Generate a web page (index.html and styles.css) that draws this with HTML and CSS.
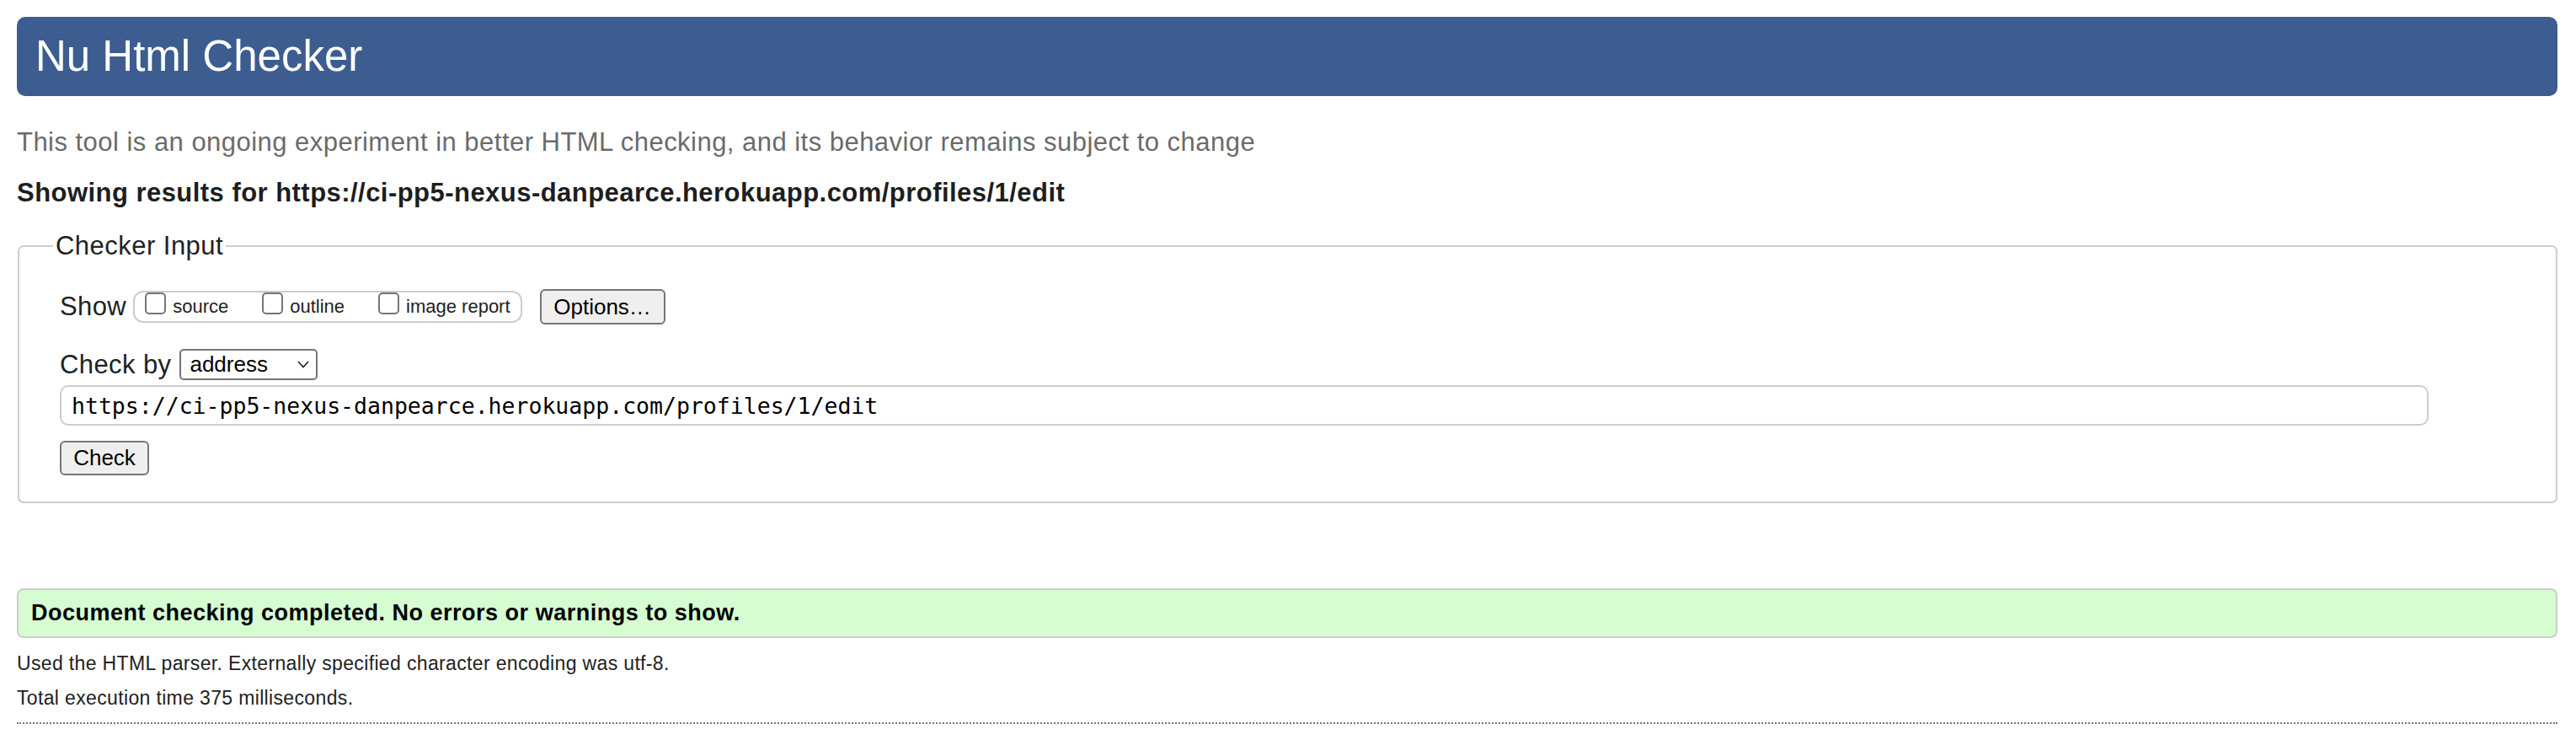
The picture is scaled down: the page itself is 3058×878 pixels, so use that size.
FILE: index.html
```html
<!DOCTYPE html>
<html lang="en">
<head>
<meta charset="utf-8">
<title>Nu Html Checker</title>
<link rel="stylesheet" href="styles.css">
</head>
<body>
<h1 class="title">Nu Html Checker</h1>
<p class="intro">This tool is an ongoing experiment in better HTML checking, and its behavior remains subject to change</p>
<p class="showing">Showing results for https://ci-pp5-nexus-danpearce.herokuapp.com/profiles/1/edit</p>
<fieldset class="checker">
  <legend class="legend">Checker Input</legend>
  <div class="row row-show">
    <span class="label">Show</span>
    <div class="group">
      <span class="opt"><span class="box"></span><span class="opt-text">source</span></span>
      <span class="opt"><span class="box"></span><span class="opt-text">outline</span></span>
      <span class="opt"><span class="box"></span><span class="opt-text">image report</span></span>
    </div>
    <span class="btn btn-options">Options…</span>
  </div>
  <div class="row row-by">
    <span class="label">Check by</span>
    <span class="select"><span class="select-text">address</span><svg class="chev" width="14" height="9" viewBox="0 0 14 9"><path d="M1 1 L7 7.5 L13 1" fill="none" stroke="#222" stroke-width="1.6"/></svg></span>
  </div>
  <div class="url">https://ci-pp5-nexus-danpearce.herokuapp.com/profiles/1/edit</div>
  <span class="btn btn-check">Check</span>
</fieldset>
<div class="success">Document checking completed. No errors or warnings to show.</div>
<p class="info">Used the HTML parser. Externally specified character encoding was utf-8.</p>
<p class="info">Total execution time 375 milliseconds.</p>
<hr class="rule">
</body>
</html>
```

FILE: styles.css
```css
html, body {
  margin: 0;
  padding: 0;
  background: #fff;
}
body {
  padding: 20px 22px 0 20px;
  font-family: "Liberation Sans", Arial, Helvetica, sans-serif;
  color: #222;
}
.title {
  margin: 0;
  padding: 17px 22px;
  line-height: 60px;
  font-size: 51px;
  font-weight: normal;
  color: #fff;
  background: #3d5d91;
  border-radius: 10px;
}
.intro {
  margin: 37px 0 0 0;
  font-size: 31px;
  letter-spacing: 0.47px;
  line-height: 36px;
  color: #6b6b6b;
}
.showing {
  margin: 24px 0 0 0;
  font-size: 31px;
  letter-spacing: 0.46px;
  line-height: 36px;
  font-weight: bold;
  color: #1e1e1e;
}
.checker {
  margin: 27px 0 0 1px;
  padding: 33px 20px 31px 48px;
  border: 2px solid #cdcdcd;
  border-radius: 7px;
  min-width: 0;
}
.legend {
  margin-left: -8px;
  padding: 0 3px;
  font-size: 31px;
  letter-spacing: 0.47px;
  line-height: 36px;
  color: #222;
}
.row {
  display: flex;
  align-items: center;
}
.label {
  font-size: 31px;
  letter-spacing: 0.4px;
  line-height: 36px;
  color: #222;
}
.row-show {
  height: 42px;
}
.group {
  box-sizing: border-box;
  height: 38px;
  margin-left: 8px;
  padding: 0 12px;
  border: 2px solid #cdcdcd;
  border-radius: 12px;
  display: flex;
  align-items: flex-start;
  gap: 40px;
}
.opt {
  display: flex;
  align-items: flex-start;
}
.box {
  box-sizing: border-box;
  width: 25px;
  height: 26px;
  border: 2px solid #767676;
  border-radius: 5px;
  background: #fff;
}
.opt-text {
  margin-left: 8px;
  font-size: 22px;
  line-height: 34px;
  color: #222;
}
.btn {
  box-sizing: border-box;
  display: inline-flex;
  align-items: center;
  justify-content: center;
  font-size: 26px;
  color: #000;
  background: #efefef;
  border: 2px solid #767676;
  border-radius: 6px;
}
.btn-options {
  width: 149px;
  height: 42px;
  margin-left: 21px;
}
.row-by {
  margin-top: 29px;
  height: 37px;
}
.select {
  box-sizing: border-box;
  width: 164px;
  height: 37px;
  margin-left: 10px;
  padding: 0 8px 0 10px;
  border: 2px solid #767676;
  border-radius: 5px;
  display: flex;
  align-items: center;
  justify-content: space-between;
  font-size: 26px;
  color: #000;
  background: #fff;
}
.chev {
  display: block;
}
.url {
  box-sizing: border-box;
  margin-top: 6px;
  width: 2812px;
  height: 48px;
  padding: 0 12px;
  border: 2px solid #cdcdcd;
  border-radius: 10px;
  display: flex;
  align-items: center;
  font-family: "DejaVu Sans Mono", "Liberation Mono", monospace;
  font-size: 26.5px;
  color: #000;
}
.btn-check {
  margin-top: 18px;
  width: 106px;
  height: 41px;
}
.success {
  box-sizing: border-box;
  margin-top: 101px;
  height: 59px;
  padding: 0 15px;
  display: flex;
  align-items: center;
  font-size: 27px;
  letter-spacing: 0.5px;
  font-weight: bold;
  color: #000;
  background: #d6fcd1;
  border: 2px solid #cdcdcd;
  border-radius: 8px;
}
.info {
  margin: 0;
  font-size: 23px;
  letter-spacing: 0.35px;
  line-height: 41px;
  color: #222;
}
.success + .info {
  margin-top: 10px;
}
.rule {
  margin: 8px 0 0 0;
  height: 0;
  border: 0;
  border-top: 2px dotted #777;
}
```
